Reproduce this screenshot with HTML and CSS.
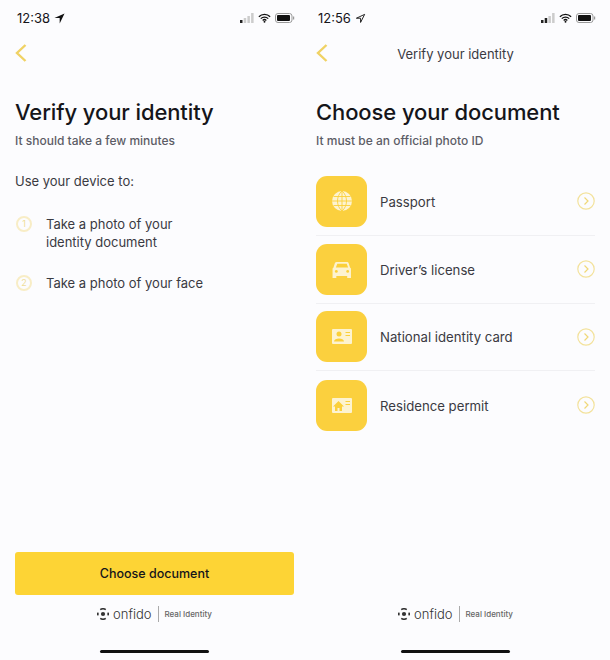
FILE: index.html
```html
<!DOCTYPE html>
<html lang="en">
<head>
  <meta charset="UTF-8">
  <meta name="viewport" content="width=device-width, initial-scale=1.0">
  <title>Verify your identity</title>
  <link rel="stylesheet" href="styles.css">
</head>
<body>

  <!-- Intro screen -->
  <div class="screen screen-left">
    <div class="status-bar">
      <span class="time">12:38</span>
      <svg class="arrow" width="11" height="11" viewBox="0 0 12 12"><path d="M11.500 .5 .5 5.400h5.700V11.500z" fill="#111"/></svg>
      <span class="status-icons">
        <svg width="14" height="10" viewBox="0 0 14 10"><rect x="0" y="7" width="2.500" height="3" fill="#222"/><rect x="3.700" y="5" width="2.500" height="5" fill="#ccc"/><rect x="7.400" y="3" width="2.500" height="7" fill="#ccc"/><rect x="11.100" y="0" width="2.500" height="10" fill="#ccc"/></svg>
        <svg width="13" height="10" viewBox="0 0 15 11"><path d="M1 4a9 9 0 0 1 13 0M3.200 6.200a6 6 0 0 1 8.600 0M5.400 8.300a3 3 0 0 1 4.200 0" fill="none" stroke="#111" stroke-width="1.500"/><circle cx="7.500" cy="9.800" r="1.100" fill="#111"/></svg>
        <svg width="20" height="10" viewBox="0 0 20 10"><rect x=".5" y=".5" width="16.500" height="9" rx="2.500" fill="none" stroke="#999"/><rect x="2" y="2" width="13" height="6" rx="1" fill="#111"/><rect x="18" y="3.500" width="1.200" height="3" fill="#999"/></svg>
      </span>
    </div>
    <div class="nav-bar">
      <svg class="back" width="12" height="18" viewBox="0 0 12 18"><path d="M10.500 1 2 9l8.500 8" fill="none" stroke="#f0d264" stroke-width="2.400"/></svg>
    </div>
    <h1>Verify your identity</h1>
    <p class="sub">It should take a few minutes</p>
    <p class="lead">Use your device to:</p>
    <div class="step step-first">
      <span class="step-num">1</span>
      <span>Take a photo of your<br>identity document</span>
    </div>
    <div class="step">
      <span class="step-num">2</span>
      <span>Take a photo of your face</span>
    </div>
    <div class="bottom">
      <button class="main-btn">Choose document</button>
      <div class="brand">
        <svg width="12" height="12" viewBox="0 0 13 13"><circle cx="6.500" cy="6.500" r="2.300" fill="#333"/><path d="M3.500 1.800a5.500 5.500 0 0 1 6 0M3.500 11.200a5.500 5.500 0 0 0 6 0" fill="none" stroke="#333" stroke-width="1.700"/><rect x="0" y="5" width="1.800" height="3" fill="#333"/><rect x="11.200" y="5" width="1.800" height="3" fill="#333"/></svg>
        <span class="brand-name">onfido</span>
        <span class="brand-line"></span>
        <span class="brand-tag">Real Identity</span>
      </div>
      <div class="home-bar"></div>
    </div>
  </div>

  <!-- Document list -->
  <div class="screen screen-right">
    <div class="status-bar">
      <span class="time">12:56</span>
      <svg class="arrow" width="11" height="11" viewBox="0 0 12 12"><path d="M10.500 1.500 1.500 5.700h4.600v4.600z" fill="none" stroke="#111"/></svg>
      <span class="status-icons">
        <svg width="14" height="10" viewBox="0 0 14 10"><rect x="0" y="7" width="2.500" height="3" fill="#222"/><rect x="3.700" y="5" width="2.500" height="5" fill="#222"/><rect x="7.400" y="3" width="2.500" height="7" fill="#ccc"/><rect x="11.100" y="0" width="2.500" height="10" fill="#ccc"/></svg>
        <svg width="13" height="10" viewBox="0 0 15 11"><path d="M1 4a9 9 0 0 1 13 0M3.200 6.200a6 6 0 0 1 8.600 0M5.400 8.300a3 3 0 0 1 4.200 0" fill="none" stroke="#111" stroke-width="1.500"/><circle cx="7.500" cy="9.800" r="1.100" fill="#111"/></svg>
        <svg width="20" height="10" viewBox="0 0 20 10"><rect x=".5" y=".5" width="16.500" height="9" rx="2.500" fill="none" stroke="#999"/><rect x="2" y="2" width="13" height="6" rx="1" fill="#111"/><rect x="18" y="3.500" width="1.200" height="3" fill="#999"/></svg>
      </span>
    </div>
    <div class="nav-bar">
      <svg class="back" width="12" height="18" viewBox="0 0 12 18"><path d="M10.500 1 2 9l8.500 8" fill="none" stroke="#f0d264" stroke-width="2.400"/></svg>
      <span class="nav-title">Verify your identity</span>
    </div>
    <h1>Choose your document</h1>
    <p class="sub">It must be an official photo ID</p>
    <div class="doc-list">
      <div class="doc-row">
        <span class="doc-icon">
          <svg width="20" height="20" viewBox="0 0 20 20"><circle cx="10" cy="10" r="10" fill="#fdf3d0"/><path d="M0 10h20M1.500 5.500h17M1.500 14.500h17M10 0v20M10 0c-6 5-6 15 0 20M10 0c6 5 6 15 0 20" fill="none" stroke="#fbd03a" stroke-width=".9"/></svg>
        </span>
        <span class="doc-name">Passport</span>
        <svg class="doc-arrow" width="18" height="18" viewBox="0 0 18 18"><circle cx="9" cy="9" r="8.200" fill="none" stroke="#f3e29c" stroke-width="1.200"/><path d="M7.500 5.500 11 9l-3.500 3.500" fill="none" stroke="#f0d878" stroke-width="1.200"/></svg>
      </div>
      <div class="doc-row">
        <span class="doc-icon">
          <svg width="20" height="17" viewBox="0 0 20 18"><path d="M4.500 1h11q1 0 1.500 1l1.500 5 1 1V18h-4v-2H4v2H0V8l1-1 1.500-5q.5-1 2-1z" fill="#fdf3d0"/><path d="M5 3h10l1.500 4h-13z" fill="#fbd03a"/><circle cx="4" cy="11" r="1.500" fill="#fbd03a"/><circle cx="16" cy="11" r="1.500" fill="#fbd03a"/></svg>
        </span>
        <span class="doc-name">Driver’s license</span>
        <svg class="doc-arrow" width="18" height="18" viewBox="0 0 18 18"><circle cx="9" cy="9" r="8.200" fill="none" stroke="#f3e29c" stroke-width="1.200"/><path d="M7.500 5.500 11 9l-3.500 3.500" fill="none" stroke="#f0d878" stroke-width="1.200"/></svg>
      </div>
      <div class="doc-row">
        <span class="doc-icon">
          <svg width="20" height="15" viewBox="0 0 20 15"><rect width="20" height="15" rx="1" fill="#fdf3d0"/><circle cx="7" cy="5" r="2.500" fill="#fbd03a"/><path d="M2 12.500c0-4 10-4 10 0z" fill="#fbd03a"/><path d="M13.500 3.500H18M13.500 6.500H18" stroke="#fbd03a"/></svg>
        </span>
        <span class="doc-name">National identity card</span>
        <svg class="doc-arrow" width="18" height="18" viewBox="0 0 18 18"><circle cx="9" cy="9" r="8.200" fill="none" stroke="#f3e29c" stroke-width="1.200"/><path d="M7.500 5.500 11 9l-3.500 3.500" fill="none" stroke="#f0d878" stroke-width="1.200"/></svg>
      </div>
      <div class="doc-row">
        <span class="doc-icon">
          <svg width="20" height="15" viewBox="0 0 20 15"><rect width="20" height="15" rx="1" fill="#fdf3d0"/><path d="M6.500 3 1 8.500h2V13h2.500V10h2v3H10V8.500h2z" fill="#fbd03a"/><path d="M13.500 3.500H18M13.500 6.500H18" stroke="#fbd03a"/></svg>
        </span>
        <span class="doc-name">Residence permit</span>
        <svg class="doc-arrow" width="18" height="18" viewBox="0 0 18 18"><circle cx="9" cy="9" r="8.200" fill="none" stroke="#f3e29c" stroke-width="1.200"/><path d="M7.500 5.500 11 9l-3.500 3.500" fill="none" stroke="#f0d878" stroke-width="1.200"/></svg>
      </div>
    </div>
    <div class="bottom">
      <div class="brand">
        <svg width="12" height="12" viewBox="0 0 13 13"><circle cx="6.500" cy="6.500" r="2.300" fill="#333"/><path d="M3.500 1.800a5.500 5.500 0 0 1 6 0M3.500 11.200a5.500 5.500 0 0 0 6 0" fill="none" stroke="#333" stroke-width="1.700"/><rect x="0" y="5" width="1.800" height="3" fill="#333"/><rect x="11.200" y="5" width="1.800" height="3" fill="#333"/></svg>
        <span class="brand-name">onfido</span>
        <span class="brand-line"></span>
        <span class="brand-tag">Real Identity</span>
      </div>
      <div class="home-bar"></div>
    </div>
  </div>

</body>
</html>
```

FILE: styles.css
```css
/* Page */
body {
  margin: 0;
  display: flex;
  height: 660px;
  overflow: hidden;
  background-color: #fcfcfe;
  font-family: "Inter", "Noto Sans", sans-serif;
  color: #3a3a42;
}

.screen {
  display: flex;
  flex-direction: column;
  height: 660px;
  box-sizing: border-box;
}

.screen-left {
  width: 300px;
  padding: 0 6px 0 15px;
}

.screen-right {
  flex: 1;
  padding: 0 15px 0 16px;
}

/* Status bar */
.status-bar {
  display: flex;
  align-items: center;
  height: 36px;
  margin-right: -1px;
  padding-left: 2px;
}

.time {
  font-size: 13px;
  color: #15151a;
  margin-right: 4px;
}

.status-icons {
  display: flex;
  align-items: center;
  gap: 4px;
  margin-left: auto;
}

/* Nav bar */
.nav-bar {
  display: flex;
  align-items: center;
  height: 34px;
}

.nav-title {
  flex: 1;
  text-align: center;
  font-size: 13px;
  padding-top: 2px;
  padding-right: 12px;
}

/* Headings */
h1 {
  margin: 25px 0 0;
  font-size: 22px;
  line-height: 34px;
  font-weight: 500;
  letter-spacing: -0.1px;
  color: #15151a;
  white-space: nowrap;
}

.sub {
  margin: 2px 0 0;
  font-size: 12px;
  line-height: 20px;
  font-weight: 500;
  color: #5c5c66;
}

.lead {
  margin: 20px 0 0;
  font-size: 13px;
  line-height: 20px;
}

/* Steps */
.step {
  display: flex;
  gap: 14px;
  margin-top: 23px;
  margin-left: 1px;
  font-size: 13px;
  line-height: 18px;
}

.step-first {
  margin-top: 24px;
}

.step-num {
  width: 12px;
  height: 12px;
  margin-top: 1px;
  border: 2px solid #f8edc6;
  border-radius: 50%;
  font-size: 9px;
  line-height: 12px;
  text-align: center;
  color: #efdc98;
}

/* Documents */
.doc-list {
  margin-top: 17px;
}

.doc-row {
  display: flex;
  align-items: center;
  height: 67.8px;
  box-sizing: border-box;
  border-bottom: 1px solid #f0f0f3;
  font-size: 13.2px;
}

.doc-row:last-child {
  border-bottom: none;
}

.doc-icon {
  display: flex;
  align-items: center;
  justify-content: center;
  width: 51px;
  height: 51px;
  border-radius: 11px;
  background-color: #fbd03e;
}

.doc-name {
  flex: 1;
  margin-left: 13px;
  padding-top: 1px;
}

/* Footer */
.bottom {
  margin-top: auto;
  display: flex;
  flex-direction: column;
  align-items: center;
}

.main-btn {
  width: 100%;
  height: 43px;
  border: none;
  border-radius: 3px;
  background-color: #fdd435;
  font-family: inherit;
  font-size: 12.5px;
  font-weight: 500;
  color: #15151a;
}

.brand {
  display: flex;
  align-items: center;
  height: 18px;
  margin-top: 10px;
}

.brand-name {
  margin-left: 4px;
  font-size: 13px;
  font-weight: 300;
  color: #333;
}

.brand-line {
  width: 1px;
  height: 16px;
  margin: 0 6px;
  background-color: #aaa;
}

.brand-tag {
  font-size: 8px;
  font-weight: 500;
  color: #666;
}

.home-bar {
  width: 109px;
  height: 3px;
  margin: 27px 0 7px;
  border-radius: 2px;
  background-color: #111;
}
```
